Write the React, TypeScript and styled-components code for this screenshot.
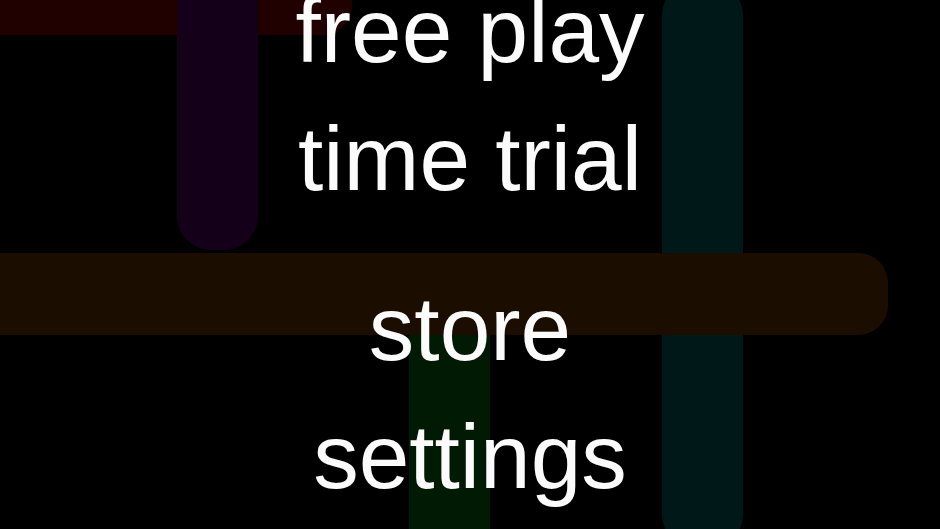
import React from 'react';
import styled, { createGlobalStyle } from 'styled-components';

type Pipe = { x: number; y: number; w: number; h: number; r: number; color: string };

// dimmed flows behind the menu, board coordinates
const pipes: Pipe[] = [
  { x: -40, y: -48, w: 392, h: 83, r: 30, color: '#210000' },
  { x: 177, y: -40, w: 81, h: 290, r: 34, color: '#150019' },
  { x: 662, y: -15, w: 81, h: 560, r: 30, color: '#001818' },
  { x: 409, y: 320, w: 81, h: 240, r: 0, color: '#001a04' },
  { x: -40, y: 253, w: 928, h: 82, r: 30, color: '#1c0d01' },
];

const menu = [['free play', 'time trial'], ['store', 'settings']];

const App = () => {
  return (
    <>
      <GlobalStyle />
      <Screen>
        <Board viewBox="0 0 940 529" preserveAspectRatio="xMidYMid slice">
          {pipes.map((p, i) => (
            <rect key={i} x={p.x} y={p.y} width={p.w} height={p.h} rx={p.r} fill={p.color} />
          ))}
        </Board>
        <Menu>
          {menu.map((group, i) => (
            <MenuGroup key={i}>
              {group.map((label) => (
                <MenuItem key={label}>{label}</MenuItem>
              ))}
            </MenuGroup>
          ))}
        </Menu>
      </Screen>
    </>
  );
};

const GlobalStyle = createGlobalStyle`
html, body {
  margin: 0;
  padding: 0;
  background: #000;
}
`;

const Screen = styled.div`
position: relative;
width: 100vw;
height: 100vh;
overflow: hidden;
background: #000;
font-family: "Liberation Sans", Arial, sans-serif;
`;

const Board = styled.svg`
position: absolute;
inset: 0;
width: 100%;
height: 100%;
`;

const Menu = styled.nav`
position: relative;
display: flex;
flex-direction: column;
align-items: center;
gap: 42px;
margin-top: -33px;
`;

const MenuGroup = styled.div`
display: flex;
flex-direction: column;
align-items: center;
`;

const MenuItem = styled.div`
font-size: 91px;
line-height: 128px;
color: #fbfbfb;
white-space: nowrap;
cursor: pointer;
`;

export default App;
